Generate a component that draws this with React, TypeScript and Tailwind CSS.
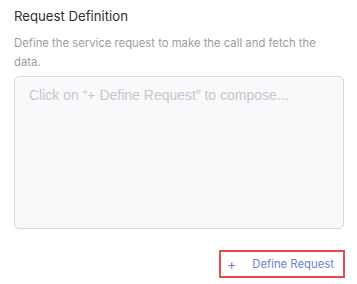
export default function App() {
  return (
    <div className="w-[357px] h-[284px] bg-white px-[14px] pt-[8px] font-['Inter',sans-serif]">
      <h2 className="text-[13.2px] leading-[16px] text-[#2d2f33]">Request Definition</h2>
      <p className="mt-[10px] text-[11.3px] leading-[18.5px] text-[#9a9ca3]">
        Define the service request to make the call and fetch the data.
      </p>
      <textarea
        readOnly
        placeholder="Click on “+ Define Request” to compose..."
        className="mt-[5px] block w-[330px] h-[153px] resize-none rounded-[5px] border border-[#d6d9e0] bg-[#f8f9fb] px-[14px] py-[8px] text-[14px] font-['Liberation_Sans',sans-serif] placeholder:text-[#c5c7cc] outline-none"
      />
      <div className="mt-[21px] flex justify-end">
        <button className="mr-[-2px] flex h-[28px] w-[126px] items-center border-[2px] border-[#ef4449] pl-[6px] text-[11.3px] text-[#6f7fd6]">
          <span className="text-[14px] leading-none">+</span>
          <span className="ml-[16px]">Define Request</span>
        </button>
      </div>
    </div>
  );
}
